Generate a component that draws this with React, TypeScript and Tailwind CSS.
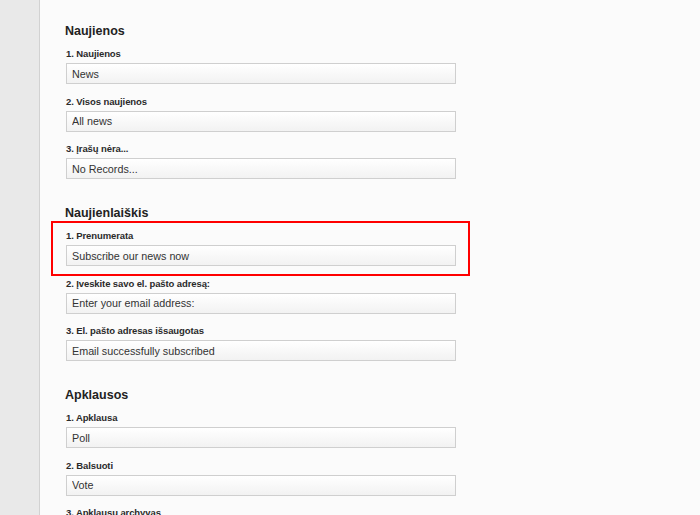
import React from "react";

type Field = {
  label: string;
  value: string;
  highlight?: boolean;
};

type Section = {
  title: string;
  fields: Field[];
};

const sections: Section[] = [
  {
    title: "Naujienos",
    fields: [
      { label: "1. Naujienos", value: "News" },
      { label: "2. Visos naujienos", value: "All news" },
      { label: "3. Įrašų nėra...", value: "No Records..." },
    ],
  },
  {
    title: "Naujienlaiškis",
    fields: [
      { label: "1. Prenumerata", value: "Subscribe our news now", highlight: true },
      { label: "2. Įveskite savo el. pašto adresą:", value: "Enter your email address:" },
      { label: "3. El. pašto adresas išsaugotas", value: "Email successfully subscribed" },
    ],
  },
  {
    title: "Apklausos",
    fields: [
      { label: "1. Apklausa", value: "Poll" },
      { label: "2. Balsuoti", value: "Vote" },
      { label: "3. Apklausų archyvas", value: "Polls archive" },
    ],
  },
];

const FieldRow: React.FC<{ field: Field }> = ({ field }) => (
  <div className="relative flex flex-col">
    {field.highlight && (
      <div className="pointer-events-none absolute -left-[15px] -right-[14px] -top-[6px] -bottom-[10px] border-2 border-[#ff0000]" />
    )}
    <label className="h-[16px] text-[9.5px] font-bold leading-[17px] tracking-[-0.1px] text-[#2a2a2a]">
      {field.label}
    </label>
    <input
      readOnly
      value={field.value}
      className="mt-[2px] h-[21px] w-[390px] border border-[#cfcfcf] bg-gradient-to-b from-white to-[#f2f2f2] px-[5px] text-[10.75px] text-[#333] outline-none"
    />
  </div>
);

export default function App() {
  return (
    <div
      className="flex h-[515px] w-full overflow-hidden bg-[#fbfbfb]"
      style={{ fontFamily: '"Liberation Sans", Arial, sans-serif' }}
    >
      <div className="w-[40px] shrink-0 border-r border-[#d2d2d2] bg-[#e9e9e9]" />
      <div className="flex flex-col gap-[25px] pl-[25px] pt-[22px]">
        {sections.map((section) => (
          <div key={section.title} className="flex flex-col">
            <h2 className="h-[16px] text-[12.5px] font-bold leading-[19px] text-[#222]">
              {section.title}
            </h2>
            <div className="ml-px mt-[7px] flex flex-col gap-[8.5px]">
              {section.fields.map((field) => (
                <FieldRow key={field.label} field={field} />
              ))}
            </div>
          </div>
        ))}
      </div>
    </div>
  );
}
